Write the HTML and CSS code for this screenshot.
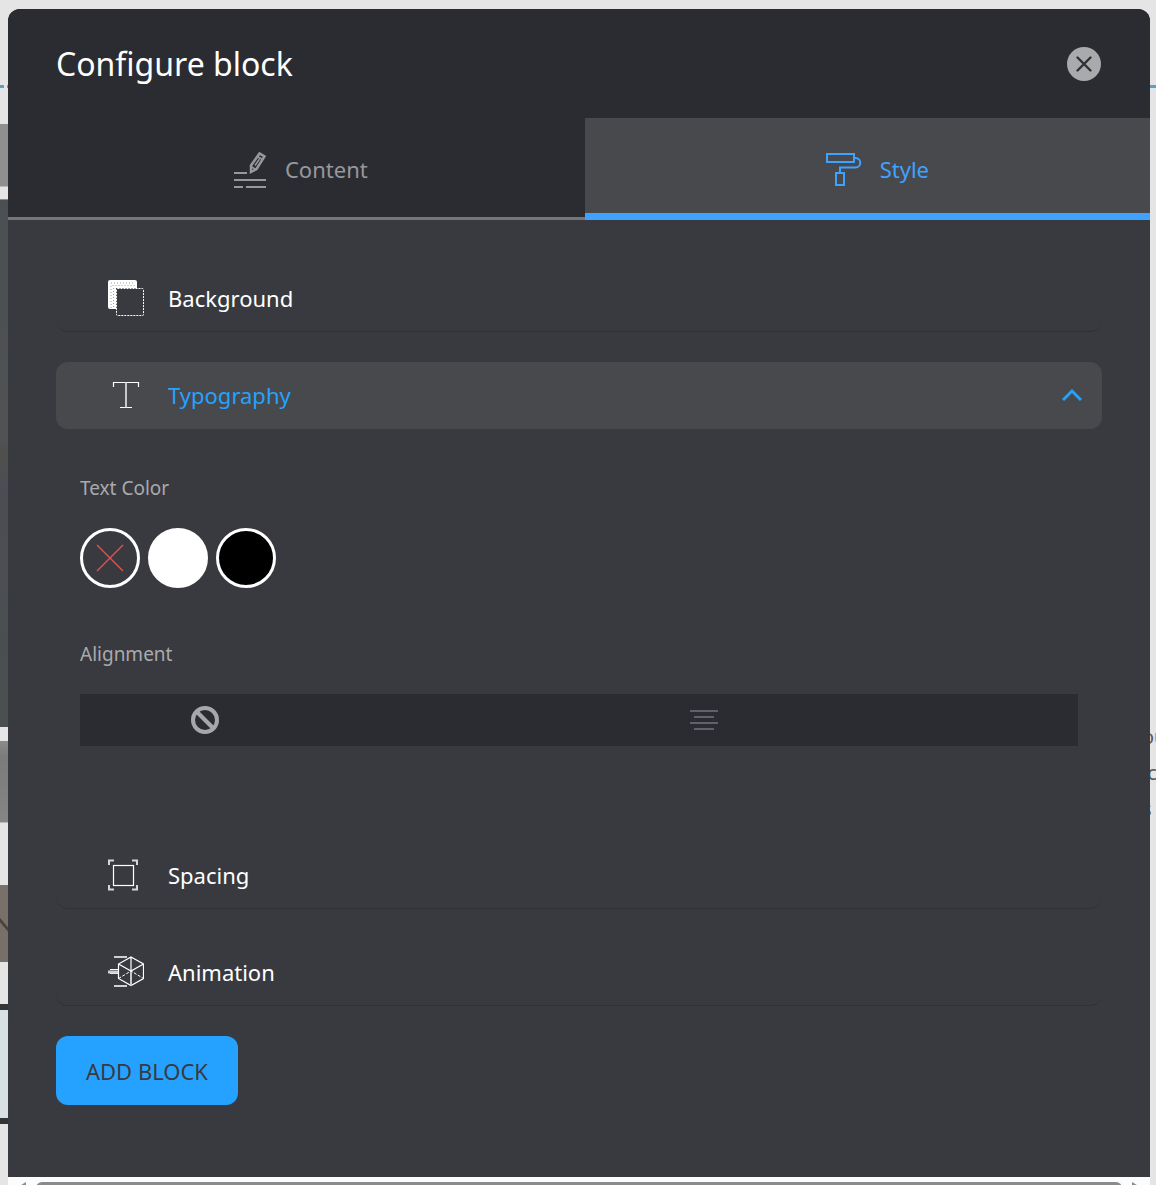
FILE: index.html
```html
<!DOCTYPE html>
<html lang="en">
<head>
  <meta charset="UTF-8">
  <meta name="viewport" content="width=device-width, initial-scale=1">
  <title>Configure block</title>
  <link rel="stylesheet" href="styles.css">
</head>
<body>

  <!-- page behind the dialog, left edge -->
  <div class="behind behind-left">
    <div class="outline"></div>
    <div class="photo-top"></div>
    <div class="photo-main"></div>
    <div class="photo-low"></div>
    <div class="wood"></div>
    <div class="frame"></div>
  </div>

  <div class="dialog">
    <header class="dialog-header">
      <h1>Configure block</h1>
      <button class="close" aria-label="Close">
        <svg width="34" height="34" viewBox="0 0 34 34">
          <circle cx="17" cy="17" r="17" fill="#a9aaac"/>
          <path d="M10.500 10.500 23.500 23.500M23.500 10.500 10.500 23.500" stroke="#303136" stroke-width="2.400" stroke-linecap="round"/>
        </svg>
      </button>
    </header>

    <nav class="tabs">
      <button class="tab tab-content">
        <svg width="34" height="38" viewBox="0 0 34 38" fill="none" stroke="currentColor">
          <path d="M1 23h13M1 30h32M1 37h9M13 37h20" stroke-width="2"/>
          <path d="M18 15.500 26.500 3.500 31.500 6.500 23.500 19 18 22z" stroke-width="2.500"/>
          <path d="M24.500 6.500 29.500 9.500M18 16.500 23 19.500M22 15.500 26.500 9" stroke-width="1.500"/>
        </svg>
        Content
      </button>
      <button class="tab tab-style active">
        <svg width="36" height="38" viewBox="0 0 36 38" fill="none" stroke="currentColor" stroke-width="2">
          <path d="M1 4h27v8H1zM28 8h1.500a4.600 4.600 0 0 1 0 9.500H14v5.500M10 23h8v12h-8z"/>
        </svg>
        Style
      </button>
    </nav>

    <main class="sections">
      <button class="section">
        <svg class="section-icon" width="36" height="36" viewBox="0 0 36 36" fill="none">
          <path d="M2 0h25a2 2 0 0 1 2 2v6H8v21H2a2 2 0 0 1-2-2V2a2 2 0 0 1 2-2z" fill="#fff"/>
          <path d="M3 3h24M4.500 5.500h22M3 6v22M5.500 8v20" stroke="#a0a1a4" stroke-dasharray="1 2"/>
          <rect x="8.500" y="8.500" width="27" height="27" rx="1" fill="#393a3f" stroke="#fff" stroke-dasharray="2 1"/>
        </svg>
        Background
      </button>

      <button class="section open">
        <svg class="section-icon" width="36" height="36" viewBox="0 0 36 36" fill="none" stroke="#fff">
          <path d="M5.500 10V5.500h25V10M12 30.500h12" stroke-width="1.200"/>
          <path d="M18 5.500v25" stroke="#c8c8ca" stroke-width="2"/>
        </svg>
        Typography
        <svg class="chevron" width="20" height="14" viewBox="0 0 20 14" fill="none">
          <path d="M1 12 10 3l9 9" stroke="#25a2ff" stroke-width="3"/>
        </svg>
      </button>

      <div class="panel">
        <fieldset class="field">
          <legend>Text Color</legend>
          <div class="swatches">
            <label class="swatch">
              <input type="radio" name="color" aria-label="No color">
              <svg width="28" height="28" viewBox="0 0 28 28">
                <path d="M1 1l26 26M27 1 1 27" stroke="#e5534f" stroke-width="1.300"/>
              </svg>
            </label>
            <label class="swatch white"><input type="radio" name="color" aria-label="White"></label>
            <label class="swatch black"><input type="radio" name="color" aria-label="Black"></label>
          </div>
        </fieldset>

        <fieldset class="field">
          <legend>Alignment</legend>
          <div class="align-bar">
            <label class="align">
              <input type="radio" name="align" aria-label="No alignment">
              <svg width="28" height="28" viewBox="0 0 28 28" fill="none" stroke="#a6a7aa" stroke-width="4">
                <circle cx="14" cy="14" r="12"/>
                <path d="M5.500 5.500l17 17"/>
              </svg>
            </label>
            <label class="align align-center">
              <input type="radio" name="align" aria-label="Center">
              <svg width="28" height="28" viewBox="0 0 28 28" stroke="#5f6269" stroke-width="2">
                <path d="M0 5h28M4 11h20M0 17h28M4 23h20"/>
              </svg>
            </label>
          </div>
        </fieldset>
      </div>

      <button class="section">
        <svg class="section-icon" width="36" height="36" viewBox="0 0 36 36" fill="none" stroke="#fff">
          <path d="M1 8V3.500h5M24 3.500h5V8M1 28v4.500h5M24 32.500h5V28" stroke="#d6d6d8" stroke-width="2"/>
          <rect x="5.500" y="8.500" width="20" height="20" stroke-width="1.200"/>
        </svg>
        Spacing
      </button>

      <button class="section">
        <svg class="section-icon" width="36" height="36" viewBox="0 0 36 36" fill="none" stroke="#fff">
          <path d="M6 3h13M6 32h13" stroke="#cfcfd1" stroke-width="2"/>
          <path d="M2 15.500h8M2 19.500h8" stroke="#fff"/>
          <path d="M0 18h10" stroke="#cfcfd1" stroke-width="3"/>
          <path d="M23 3 35.500 10v14.500L23 31.500 10.500 24.500V10zM10.500 10 23 17 35.500 10M23 3v14" stroke-width="1.200"/>
          <path d="M23 17v14.500" stroke="#c8c8ca" stroke-width="2"/>
          <path d="M10.500 24.500 23 17l12.500 7.500" stroke-dasharray="3 1.500"/>
        </svg>
        Animation
      </button>

      <button class="add">ADD BLOCK</button>
    </main>

    <div class="scrollbar">
      <span class="arrow"></span>
      <span class="thumb"></span>
      <span class="arrow arrow-right"></span>
    </div>
  </div>

  <!-- page behind the dialog, right edge -->
  <div class="behind behind-right">
    <div class="outline"></div>
    <p>ou<br>&nbsp;c<br>s</p>
  </div>

</body>
</html>
```

FILE: styles.css
```css
* {
  box-sizing: border-box;
}
body {
  margin: 0;
  height: 100vh;
  overflow: hidden;
  display: grid;
  grid-template-columns: 8px 1fr 6px;
  background: #e5e5e5;
  font-family: "Noto Sans", "Open Sans", sans-serif;
  font-size: 22px;
  color: #fff;
}
button {
  font: inherit;
  color: inherit;
  border: 0;
  padding: 0;
  background: none;
  cursor: pointer;
}
svg {
  display: block;
  flex: none;
}

/* page behind */
.behind {
  display: flex;
  flex-direction: column;
  overflow: hidden;
}
.outline {
  flex: none;
  height: 3px;
  margin-top: 85px;
  background: #5b9dcb;
}
.behind-left .outline {
  background: linear-gradient(90deg, #5b9dcb 4px, transparent 4px, transparent 7px, #5b9dcb 7px);
}
.photo-top {
  flex: none;
  height: 63px;
  margin-top: 36px;
  background: #8f8f8f;
  border-bottom: 1px solid #b8b8b8;
}
.photo-main {
  flex: none;
  height: 528px;
  margin-top: 12px;
  background: linear-gradient(#4b4f51, #505254 45%, #4f4f4d 48%, #4c4d54 55%, #4b4f4f);
  border-top: 1px solid #8a8a8a;
}
.photo-low {
  flex: none;
  height: 82px;
  margin-top: 14px;
  background: linear-gradient(#8b8b8b, #7b7b7b 20%, #858585);
  border-bottom: 1px solid #b8b8b8;
}
.wood {
  flex: none;
  height: 77px;
  margin-top: 62px;
  background: linear-gradient(50deg, #77706a 45%, #48433f 47%, #48433f 50%, #797169 52%);
}
.frame {
  flex: none;
  height: 120px;
  margin-top: 42px;
  background: #d8e0e4;
  border: solid #353535;
  border-width: 6px 0;
}
.behind-right p {
  margin: 631px 0 0 -8px;
  font-size: 20px;
  line-height: 36px;
  white-space: nowrap;
  color: #55585c;
}

/* dialog */
.dialog {
  display: flex;
  flex-direction: column;
  margin-top: 9px;
  border-radius: 12px 12px 0 0;
  background: #393a3f;
  overflow: hidden;
}
.dialog-header {
  display: flex;
  flex: none;
  align-items: center;
  justify-content: space-between;
  height: 109px;
  padding: 0 49px 0 48px;
  background: #2b2c31;
}
.dialog-header h1 {
  margin: 0;
  font-size: 32px;
  font-weight: 400;
}

.tabs {
  display: grid;
  flex: none;
  grid-template-columns: 51fr 50fr;
  height: 102px;
  background: #2b2c31;
}
.tab {
  display: flex;
  align-items: center;
  justify-content: center;
  gap: 18px;
  color: #97989c;
  box-shadow: inset 0 -3px #75767a;
}
.tab-content {
  padding-left: 8px;
}
.tab-style {
  padding-left: 20px;
}
.tab.active {
  color: #40a2ff;
  background: #48494d;
  box-shadow: inset 0 -7px #40a2ff;
}

.sections {
  flex: none;
  padding: 45px 48px 72px;
}
.section {
  display: flex;
  align-items: center;
  gap: 24px;
  width: 100%;
  height: 67px;
  margin-bottom: 30px;
  padding: 0 20px 0 52px;
  border-bottom: 1px solid #303136;
  border-radius: 12px;
}
.section.open {
  margin-bottom: 0;
  color: #25a2ff;
  background: #48494d;
  border-bottom-color: #48494d;
}
.chevron {
  margin-left: auto;
}

.panel {
  padding: 43px 24px 96px;
}
.field {
  margin: 0;
  padding: 0;
  border: 0;
  min-width: 0;
}
.field + .field {
  margin-top: 50px;
}
.field legend {
  padding: 0;
  margin-bottom: 24px;
  font-size: 19px;
  line-height: 32px;
  color: #a9aaac;
}
.field input {
  position: absolute;
  opacity: 0;
}
.swatches {
  display: flex;
  gap: 8px;
}
.swatch {
  display: flex;
  align-items: center;
  justify-content: center;
  width: 60px;
  height: 60px;
  border: 3px solid #fff;
  border-radius: 50%;
}
.swatch.white {
  background: #fff;
}
.swatch.black {
  background: #000;
}
.align-bar {
  display: grid;
  grid-template-columns: repeat(4, 1fr);
  height: 52px;
  background: #2b2c31;
}
.align {
  display: flex;
  align-items: center;
  justify-content: center;
}
.align-center {
  grid-column: 3;
}

.add {
  display: block;
  height: 69px;
  padding: 0 30px;
  border-radius: 12px;
  background: #25a2ff;
  color: #393a3f;
}

/* horizontal scrollbar */
.scrollbar {
  display: flex;
  flex: none;
  gap: 10px;
  padding: 5px 10px 0;
  background: #fcfcfc;
}
.thumb {
  flex: 1;
  height: 12px;
  border-radius: 6px;
  background: #8b8b8b;
}
.arrow {
  width: 8px;
  height: 10px;
  background: #8b8b8b;
  clip-path: polygon(100% 0, 100% 100%, 0 50%);
}
.arrow-right {
  clip-path: polygon(0 0, 100% 50%, 0 100%);
}
```
